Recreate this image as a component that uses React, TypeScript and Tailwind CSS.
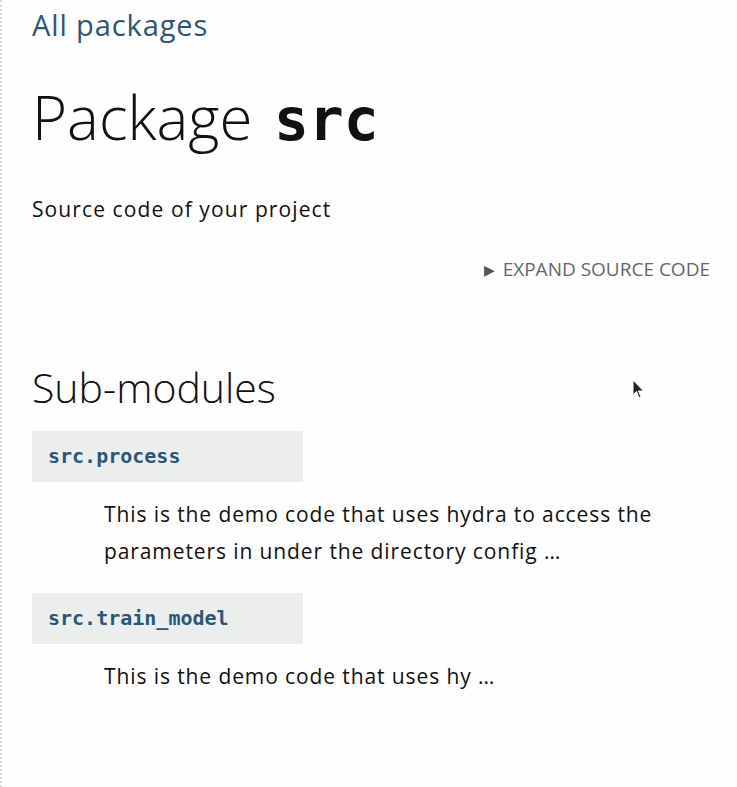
import type React from "react";

const modules = [
  {
    name: "src.process",
    doc: "This is the demo code that uses hydra to access the parameters in under the directory config …",
  },
  {
    name: "src.train_model",
    doc: "This is the demo code that uses hy …",
  },
];

const App: React.FC = () => {
  return (
    <div className="relative min-h-[787px] w-[737px] overflow-hidden border-l-2 border-dotted border-[#d4d8d8] bg-[#fefefe] font-['Open_Sans',sans-serif] text-[#111]">
      <div className="pl-[30px] pr-[27px] pt-[6px]">
        <a href="#" className="block text-[29px] leading-[38px] tracking-[0.9px] text-[#2b5777]">
          All packages
        </a>

        <h1 className="mt-[37px] text-[60px] font-light leading-[72px]">
          Package{" "}
          <code className="ml-[6px] font-['DejaVu_Sans_Mono',monospace] text-[58px] font-bold">src</code>
        </h1>

        <p className="mt-[38px] text-[21px] leading-[30px] tracking-[1.1px]">Source code of your project</p>

        <div className="mt-[31px] flex justify-end">
          <span className="flex items-center gap-[8px] text-[19px] uppercase text-[#666]">
            <span className="text-[14px] text-[#555]">▶</span>
            Expand source code
          </span>
        </div>

        <h2 className="mt-[78px] text-[41px] font-light leading-[50px]">Sub-modules</h2>

        <dl className="mt-[19px]">
          {modules.map((m) => (
            <div key={m.name} className="mb-[23px]">
              <dt className="flex h-[51px] w-[271px] items-center bg-[#eceeed] px-[16px]">
                <code className="font-['DejaVu_Sans_Mono',monospace] text-[20px] font-bold text-[#2b5777]">
                  {m.name}
                </code>
              </dt>
              <dd className="ml-[72px] mt-[14px] max-w-[590px] text-[21px] leading-[37px] tracking-[0.9px]">
                {m.doc}
              </dd>
            </div>
          ))}
        </dl>
      </div>

      {/* mouse pointer in the capture */}
      <svg
        className="absolute left-[630px] top-[379px]"
        width="14"
        height="22"
        viewBox="0 0 14 22"
      >
        <path d="M1 1 L1 16 L4.5 12.5 L7 19 L9 18 L6.5 12 L11.5 12 Z" fill="#222" stroke="#fff" strokeWidth="1" />
      </svg>
    </div>
  );
};

export default App;
